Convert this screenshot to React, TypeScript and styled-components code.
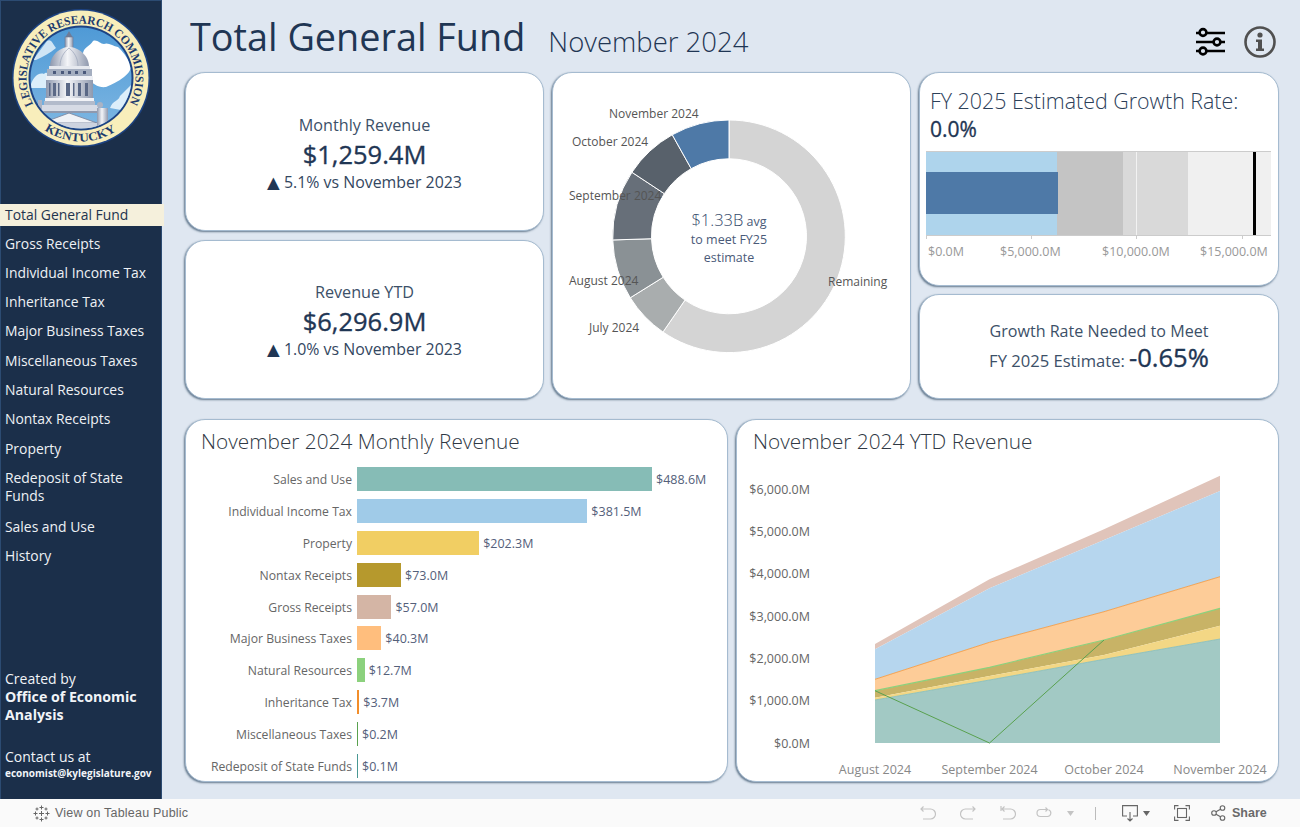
import React from "react";
import styled, { createGlobalStyle } from "styled-components";

const UI = `"Open Sans", "Noto Sans", sans-serif`;
const Global = createGlobalStyle`
  html, body { margin: 0; padding: 0; background: #dfe7f1; }
  * { box-sizing: border-box; }
`;
const Page = styled.div`
  width: 1300px; height: 827px; display: flex; flex-direction: column; overflow: hidden;
  font-family: ${UI}; background: #dfe7f1;
`;
const Board = styled.div`display: flex; height: 799px;`;
const Sidebar = styled.aside`
  width: 162px; flex: none; background: #1b2f4a; border: 1px solid #2c4b72; border-bottom: 0;
  display: flex; flex-direction: column; color: #f1f4f8; padding-bottom: 19px;
`;
const SealBox = styled.div`height: 204px; flex: none; margin: -1px 0 0 -1px;`;
const Nav = styled.nav`display: flex; flex-direction: column;`;
const NavItem = styled.div<{ $active?: boolean; $afterWrap?: boolean }>`
  font-size: 13.9px; line-height: 18px; padding: ${p => (p.$active ? "2px 5px" : "5.65px 5px")};
  margin-left: -1px; width: ${p => (p.$active ? "164px" : "160px")};
  background: ${p => (p.$active ? "#f5f0dc" : "transparent")};
  color: ${p => (p.$active ? "#22344e" : "#eef1f5")};
  ${p => p.$active && "margin-bottom: 3px;"}
  ${p => p.$afterWrap && "margin-top: 1.7px;"}
`;
const Foot = styled.div`margin-top: auto; padding-left: 4px; display: flex; flex-direction: column;`;
const FootLine = styled.div`font-size: 14px; line-height: 18px;`;
const FootBold = styled.div`font-size: 14.2px; line-height: 18px; font-weight: 700;`;
const Mail = styled.div`font-size: 10px; line-height: 13px; font-weight: 700; margin-top: 1px;`;
const Spacer = styled.div`height: 24px;`;

const Main = styled.main`flex: 1; padding: 0 21px 0 23px; display: flex; flex-direction: column;`;
const Header = styled.header`height: 72px; display: flex; align-items: center; padding: 4px 3px 0 5px; color: #1f3654;`;
const Title = styled.h1`margin: -2px 0 0; font-size: 37.8px; font-weight: 400; line-height: 44px;`;
const Sub = styled.span`font-size: 27.5px; margin-left: 23px; padding-top: 6px; font-weight: 300;`;
const HeadIcons = styled.div`margin: 8px 0 0 auto; display: flex; gap: 18px; align-items: center;`;
const TopGrid = styled.div`display: grid; grid-template-columns: 359px 359px 360px; column-gap: 8px; height: 327px;`;
const Stack = styled.div<{ $rows: string; $gap: number }>`
  display: grid; grid-template-rows: ${p => p.$rows}; row-gap: ${p => p.$gap}px;
`;
const Card = styled.section`
  background: #fff; border: 1px solid #a5bbd0; border-radius: 20px;
  box-shadow: -1px 1px 2px rgba(60, 85, 110, .75); overflow: hidden; min-width: 0;
`;
const Kpi = styled(Card)<{ $pad?: number }>`
  display: flex; flex-direction: column; align-items: center; justify-content: center; color: #1f3654;
  padding-top: ${p => p.$pad ?? 3}px;
`;
const KpiLabel = styled.div`font-size: 16.2px; line-height: 24px; color: #3c5068;`;
const KpiValue = styled.div`font-size: 25.5px; line-height: 34px; -webkit-text-stroke: .35px #1f3654;`;
const KpiDelta = styled.div`font-size: 15.9px; line-height: 22px; height: 22px; color: #33475f;`;
const Tri = styled.span`font-family: "DejaVu Sans", sans-serif; font-size: 16.5px; line-height: 0; color: #1f3654;`;
const NeededBody = styled.div`margin-top: -4px; display: flex; flex-direction: column; align-items: center;`;
const NeededLine = styled.div`
  font-size: 16.1px; line-height: 30px; height: 30px; color: #3c5068; display: flex; align-items: baseline;
  & + & { margin-top: -3px; font-size: 16.6px; }
`;
const NeededValue = styled.span`font-size: 25.6px; line-height: 30px; color: #1f3654; margin-left: 4px; -webkit-text-stroke: .35px #1f3654;`;
const ChartSvg = styled.svg`display: block;`;
const GrowthHead = styled.div`padding: 13px 0 0 10px; color: #1f3654; height: 78px;`;
const GrowthTitle = styled.div`font-size: 21.4px; line-height: 30px; color: #2c4059; font-weight: 300; white-space: nowrap;`;
const GrowthValue = styled.div`font-size: 21px; line-height: 26px; -webkit-text-stroke: .35px #1f3654;`;
const BottomGrid = styled.div`display: grid; grid-template-columns: 543px 543px; column-gap: 8px; height: 363px; margin-top: 20px;`;
const CardTitle = styled.h2`margin: 0; font-size: 20.8px; font-weight: 300; line-height: 28px; color: #2f3844;`;
const BarHead = styled.div<{ $left: number }>`padding: 7px 0 0 ${p => p.$left}px; height: 47px;`;
const AreaHead = styled(BarHead)`height: 46px;`;
const BarList = styled.div`display: flex; flex-direction: column;`;
const BarRow = styled.div<{ $tight?: boolean }>`
  display: grid; grid-template-columns: 166px 1fr; column-gap: 5px; align-items: center; height: 24px; margin-bottom: 8px;
  ${p => p.$tight && "margin-top: -1px;"}
`;
const BarLabel = styled.div`font-size: 12.2px; color: #666; text-align: right; white-space: nowrap;`;
const BarTrack = styled.div`display: flex; align-items: center; gap: 4px;`;
const Bar = styled.div<{ $color: string }>`height: 24px; background: ${p => p.$color}; flex: none;`;
const BarValue = styled.div`font-size: 12.5px; color: #54607a; white-space: nowrap;`;

const Toolbar = styled.footer`
  height: 28px; flex: none; background: #fafafa; display: flex; align-items: center; padding: 0 33px;
  font-family: "Liberation Sans", Arial, sans-serif; font-size: 12.5px; color: #666;
`;
const TabLink = styled.div`display: flex; align-items: center; gap: 5px; letter-spacing: .2px;`;
const Tools = styled.div`margin-left: auto; display: flex; align-items: center;`;
const Tool = styled.svg<{ $ml: number }>`display: block; margin-left: ${p => p.$ml}px; flex: none;`;
const ShareText = styled.span`margin-left: 6px; font-weight: 700; color: #6a6a6a; width: 35px; white-space: nowrap;`;
const Divider = styled.div`width: 1px; height: 13px; background: #bbb; margin-left: 21px;`;

const Seal = () => (
  <svg width="162" height="204" viewBox="0 0 162 204" style={{ display: "block" }}>
    <defs>
      <clipPath id="inner"><circle cx="81" cy="78" r="50.5" /></clipPath>
      <linearGradient id="dome" x1="0" x2="1" y1="0" y2="0">
        <stop offset="0" stopColor="#8d97ad" /><stop offset=".45" stopColor="#f4f5f8" /><stop offset="1" stopColor="#8f99ae" />
      </linearGradient>
      <linearGradient id="sky" x1="0" x2="0" y1="0" y2="1">
        <stop offset="0" stopColor="#4f9ad6" /><stop offset="1" stopColor="#7db6e2" />
      </linearGradient>
      <path id="topArc" d="M 33.2 104.2 A 54.5 54.5 0 1 1 128.8 104.2" />
      <path id="botArc" d="M 44.5 130 A 63.7 63.7 0 0 0 117.5 130" />
    </defs>
    <circle cx="81" cy="78" r="69" fill="#1d4383" />
    <circle cx="81" cy="78" r="67.5" fill="#f8eebb" />
    <circle cx="81" cy="78" r="52.5" fill="#1d4383" />
    <circle cx="81" cy="78" r="50.5" fill="url(#sky)" />
    <g clipPath="url(#inner)">
      <path d="M83 53 C84 47 90 46 93 41 C97 39 100 44 104 44 C108 42 113 46 118 47 C122 51 127 56 131 66 C131 70 128 74 124 77 C118 82 112 84 106 87 C99 88 92 84 88 78 C85 72 81 62 83 53 Z" fill="#fff" />
      <path d="M33 60 L47 41 C51 38 53 44 56 48 C50 53 44 56 36 60 Z" fill="#cfe5f5" />
      <path d="M30 88 C32 78 38 72 44 74 C47 70 52 76 50 88 Z" fill="#dceefa" />
      <path d="M110 108 C113 100 118 102 120 96 C124 92 128 88 132 84 L132 112 Z" fill="#dceefa" />
      <path d="M69 31 L73 38 H65 Z" fill="#6f7b96" />
      <rect x="65" y="37" width="8" height="11" fill="url(#dome)" stroke="#6f7b96" strokeWidth=".6" />
      <path d="M50 67 C50 55 60 47 69 47 C78 47 89 55 89 67 Z" fill="url(#dome)" />
      <path d="M60 66C60 58 64 52 69 48M78 66C78 58 74 52 69 48" stroke="#9aa4b8" strokeWidth=".7" fill="none" />
      <rect x="49" y="66" width="41" height="3" fill="#e6e9ef" />
      <rect x="47" y="69" width="45" height="7" fill="#a4aec0" />
      <path d="M53 71h3v3h-3zM61 71h3v3h-3zM68 71h3v3h-3zM75 71h3v3h-3zM83 71h3v3h-3z" fill="#49587a" />
      <rect x="46" y="76" width="47" height="4" fill="#eef0f5" />
      <rect x="46" y="80" width="47" height="18" fill="url(#dome)" />
      <path d="M49 83h1.5v13H49zM53 83h3v13h-3zM58 83h1.5v13H58zM66 83h4v13h-4zM78 83h3v13h-3zM85 83h3v13h-3zM73 83h1.5v13H73z" fill="#5a6886" />
      <rect x="45" y="98" width="49" height="3" fill="#f2f3f7" />
      <rect x="44" y="101" width="51" height="4" fill="#b3bbcb" />
      <rect x="41" y="105" width="57" height="6" fill="#d7dbe5" />
      <rect x="38" y="100" width="4" height="9" fill="#aab3c4" />
      <rect x="41" y="111" width="57" height="2" fill="#8f99ae" />
      <path d="M42 123 L69 113 L97 123 Z" fill="#f0f2f6" stroke="#7d88a0" strokeWidth=".9" />
      <rect x="40" y="123" width="60" height="9" fill="#cdd3df" />
      <rect x="97" y="108" width="11" height="18" fill="url(#dome)" /><circle cx="100" cy="105" r="3" fill="#aab3c4" />
    </g>
    <text fontFamily="'Liberation Serif', serif" fontWeight="700" fontSize="12" fill="#1d3b6e">
      <textPath href="#topArc" textLength="224" lengthAdjust="spacingAndGlyphs">LEGISLATIVE RESEARCH COMMISSION</textPath>
    </text>
    <text fontFamily="'Liberation Serif', serif" fontWeight="700" fontSize="12" fill="#1d3b6e">
      <textPath href="#botArc" textLength="76" lengthAdjust="spacingAndGlyphs">KENTUCKY</textPath>
    </text>
  </svg>
);

const SliderIcon = () => (
  <svg width="31" height="32" viewBox="0 0 31 32" fill="none" stroke="#000" strokeWidth="2.6">
    <path d="M1 7h3.5M12 7h18M1 16h17M26 16h4M1 25h3.5M12 25h18" />
    <circle cx="8" cy="6.5" r="3.4" /><circle cx="22" cy="16" r="3.4" /><circle cx="8" cy="25" r="3.4" />
  </svg>
);
const InfoIcon = () => (
  <svg width="32" height="32" viewBox="0 0 32 32">
    <circle cx="16" cy="16" r="14.5" fill="none" stroke="#505050" strokeWidth="2.6" />
    <circle cx="16" cy="9" r="2.6" fill="#505050" />
    <path d="M12 13.5h6v9h2v2.5h-8v-2.5h2v-6.5h-2z" fill="#505050" />
  </svg>
);

const ang = (deg: number, r: number) => {
  const a = (deg * Math.PI) / 180;
  return [729 + r * Math.sin(a), 236.3 - r * Math.cos(a)];
};
const seg = (a: number, b: number, R = 116.3, r = 77.5) => {
  const [x1, y1] = ang(a, R), [x2, y2] = ang(b, R), [x3, y3] = ang(b, r), [x4, y4] = ang(a, r);
  const large = b - a > 180 ? 1 : 0;
  return `M${x1} ${y1}A${R} ${R} 0 ${large} 1 ${x2} ${y2}L${x3} ${y3}A${r} ${r} 0 ${large} 0 ${x4} ${y4}Z`;
};
const donut = [
  { a: 0, b: 214.6, c: "#d4d4d4" },
  { a: 214.6, b: 238.1, c: "#a9adae" },
  { a: 238.1, b: 268.2, c: "#8a9195" },
  { a: 268.2, b: 303.4, c: "#676f79" },
  { a: 303.4, b: 330.8, c: "#58616b" },
  { a: 330.8, b: 360, c: "#4e79a7" },
];
const donutLabels = [
  ["November 2024", 609, 118], ["October 2024", 572, 146], ["September 2024", 569, 200],
  ["August 2024", 569, 285], ["July 2024", 589, 332], ["Remaining", 828, 286],
] as const;

const Donut = () => (
  <ChartSvg width="357" height="325" viewBox="553 73 357 325">
    {donut.map(d => <path key={d.a} d={seg(d.a, d.b)} fill={d.c} stroke="#fff" strokeWidth="1" />)}
    <g fontFamily={UI} fontSize="12" fill="#555">
      {donutLabels.map(([t, x, y]) => <text key={t} x={x} y={y}>{t}</text>)}
    </g>
    <g fontFamily={UI} fill="#4a5a78" textAnchor="middle" fontSize="12.5">
      <text x="729" y="226"><tspan fill="#34496a" fontSize="16.5" fontWeight="300">$1.33B</tspan> avg</text>
      <text x="729" y="244">to meet FY25</text>
      <text x="729" y="262">estimate</text>
    </g>
  </ChartSvg>
);

const bulletTicks = [926.5, 1031.5, 1136.5, 1242.5];
const bulletLabels = [["$0.0M", 928], ["$5,000.0M", 1000], ["$10,000.0M", 1102], ["$15,000.0M", 1200]] as const;
const Bullet = () => (
  <ChartSvg width="358" height="134" viewBox="920 151 358 134">
    <rect x="926" y="151" width="345" height="84" fill="#f0f0f0" />
    <rect x="1123" y="151" width="65" height="84" fill="#d9d9d9" />
    <rect x="1057" y="151" width="66" height="84" fill="#c4c4c4" />
    <rect x="926" y="151" width="131" height="84" fill="#aed4ec" />
    <rect x="926" y="172" width="132" height="42" fill="#4e79a7" />
    <rect x="1136" y="151" width="1" height="84" fill="#f2f2f2" />
    <rect x="1253" y="151" width="3" height="84" fill="#000" />
    <path d="M926 151.5H1271M926 235.5H1271" stroke="#ccc" />
    {bulletTicks.map(x => <path key={x} d={`M${x} 235V239`} stroke="#ccc" />)}
    <g fontFamily={UI} fontSize="12.5" fill="#999">
      {bulletLabels.map(([t, x]) => <text key={t} x={x} y="256">{t}</text>)}
    </g>
  </ChartSvg>
);

const bars = [
  ["Sales and Use", 488.6, "#86bcb6"], ["Individual Income Tax", 381.5, "#a0cbe8"], ["Property", 202.3, "#f1ce63"],
  ["Nontax Receipts", 73.0, "#b6992d"], ["Gross Receipts", 57.0, "#d4b5a5"], ["Major Business Taxes", 40.3, "#ffbe7d"],
  ["Natural Resources", 12.7, "#8cd17d"], ["Inheritance Tax", 3.7, "#f28e2b"], ["Miscellaneous Taxes", 0.2, "#59a14f"],
  ["Redeposit of State Funds", 0.1, "#499894"],
] as const;

const xs = [875, 989.5, 1104, 1220];
const edge = { pink: [644, 579.3, 529.3, 475.7], blue: [649.3, 588.3, 540, 491], orange: [679.3, 642.3, 611.7, 576.7], khaki: [690.7, 667.3, 640, 608.3], yellow: [697.7, 676, 655, 625.7], teal: [700, 680, 659.3, 639] };
const line = (ys: number[]) => ys.map((y, i) => `${xs[i]} ${y}`).join("L");
const band = (top: number[], bot?: number[]) => {
  const rev = bot ? [...bot].map((y, i) => `${xs[i]} ${y}`).reverse().join("L") : `1220 743L875 743`;
  return `M${line(top)}L${rev}Z`;
};
const yAxis = ["$6,000.0M", "$5,000.0M", "$4,000.0M", "$3,000.0M", "$2,000.0M", "$1,000.0M", "$0.0M"];
const yPos = [494, 536, 578, 620.5, 663, 705, 748];
const xAxis = [["August 2024", 875], ["September 2024", 989.5], ["October 2024", 1104], ["November 2024", 1220]] as const;

const Area = () => (
  <ChartSvg width="541" height="315" viewBox="737 466 541 315">
    <path d={band(edge.pink, edge.blue)} fill="#e0c4ba" />
    <path d={band(edge.blue, edge.orange)} fill="#b6d6ee" />
    <path d={band(edge.orange, edge.khaki)} fill="#fdcc98" />
    <path d={band(edge.khaki, edge.yellow)} fill="#c8b366" />
    <path d={band(edge.yellow, edge.teal)} fill="#f3d785" />
    <path d={band(edge.teal)} fill="#a2c9c4" />
    <path d={`M${line(edge.orange)}`} fill="none" stroke="#f28e2b" strokeWidth=".9" opacity=".8" />
    <path d={`M${line(edge.khaki)}`} fill="none" stroke="#8cd17d" strokeWidth="1.2" />
    <path d={`M${line(edge.teal)}`} fill="none" stroke="#86bcb6" strokeWidth=".8" />
    <path d="M875 690.7L989.5 743L1104 640" fill="none" stroke="#59a14f" strokeWidth="1" />
    <g fontFamily={UI} fontSize="12.5" fill="#666" textAnchor="end">
      {yAxis.map((t, i) => <text key={t} x="810" y={yPos[i]}>{t}</text>)}
    </g>
    <g fontFamily={UI} fontSize="12.5" fill="#888" textAnchor="middle">
      {xAxis.map(([t, x]) => <text key={t} x={x} y="774">{t}</text>)}
    </g>
  </ChartSvg>
);

const navItems = ["Gross Receipts", "Individual Income Tax", "Inheritance Tax", "Major Business Taxes", "Miscellaneous Taxes", "Natural Resources", "Nontax Receipts", "Property", "Redeposit of State Funds", "Sales and Use", "History"];

const dim = "#c4c4c4";
const Delta = ({ text }: { text: string }) => <KpiDelta><Tri>▲</Tri> {text}</KpiDelta>;

export default function App() {
  return (
    <Page>
      <Global />
      <Board>
        <Sidebar>
          <SealBox><Seal /></SealBox>
          <Nav>
            <NavItem $active>Total General Fund</NavItem>
            {navItems.map(n => <NavItem key={n} $afterWrap={n === "Sales and Use"}>{n}</NavItem>)}
          </Nav>
          <Foot>
            <FootLine>Created by</FootLine>
            <FootBold>Office of Economic</FootBold>
            <FootBold>Analysis</FootBold>
            <Spacer />
            <FootLine>Contact us at</FootLine>
            <Mail>economist@kylegislature.gov</Mail>
          </Foot>
        </Sidebar>
        <Main>
          <Header>
            <Title>Total General Fund</Title>
            <Sub>November 2024</Sub>
            <HeadIcons><SliderIcon /><InfoIcon /></HeadIcons>
          </Header>
          <TopGrid>
            <Stack $rows="159px 159px" $gap={9}>
              <Kpi><KpiLabel>Monthly Revenue</KpiLabel><KpiValue>$1,259.4M</KpiValue><Delta text="5.1% vs November 2023" /></Kpi>
              <Kpi $pad={1}><KpiLabel>Revenue YTD</KpiLabel><KpiValue>$6,296.9M</KpiValue><Delta text="1.0% vs November 2023" /></Kpi>
            </Stack>
            <Card><Donut /></Card>
            <Stack $rows="214px 105px" $gap={8}>
              <Card>
                <GrowthHead>
                  <GrowthTitle>FY 2025 Estimated Growth Rate:</GrowthTitle>
                  <GrowthValue>0.0%</GrowthValue>
                </GrowthHead>
                <Bullet />
              </Card>
              <Kpi $pad={0}>
                <NeededBody>
                  <NeededLine>Growth Rate Needed to Meet</NeededLine>
                  <NeededLine>FY 2025 Estimate: <NeededValue>-0.65%</NeededValue></NeededLine>
                </NeededBody>
              </Kpi>
            </Stack>
          </TopGrid>
          <BottomGrid>
            <Card>
              <BarHead $left={15}><CardTitle>November 2024 Monthly Revenue</CardTitle></BarHead>
              <BarList>
                {bars.map(([n, v, c], i) => (
                  <BarRow key={n} $tight={i === 5}>
                    <BarLabel>{n}</BarLabel>
                    <BarTrack>
                      <Bar $color={c} style={{ width: Math.max(1, (v * 295) / 488.6) }} />
                      <BarValue>${v.toFixed(1)}M</BarValue>
                    </BarTrack>
                  </BarRow>
                ))}
              </BarList>
            </Card>
            <Card>
              <AreaHead $left={16}><CardTitle>November 2024 YTD Revenue</CardTitle></AreaHead>
              <Area />
            </Card>
          </BottomGrid>
        </Main>
      </Board>
      <Toolbar>
        <TabLink>
          <svg width="17" height="17" viewBox="0 0 17 17" stroke="#666" strokeWidth="1" fill="none">
            <path d="M8.5 0.5v4M6.5 2.5h4M8.5 12.5v4M6.5 14.5h4M0.5 8.5h4M2.5 6.5v4M12.5 8.5h4M14.5 6.5v4M8.5 6v5M6 8.5h5M4 2.5v3M2.5 4h3M13 2.5v3M11.5 4h3M4 11.5v3M2.5 13h3M13 11.5v3M11.5 13h3" />
          </svg>
          <span>View on Tableau Public</span>
        </TabLink>
        <Tools>
          <Tool $ml={0} width="16" height="16" viewBox="0 0 16 16" fill="none" stroke={dim} strokeWidth="1.2"><path d="M1 4h9.5a5 5 0 0 1 0 10H3M3.5 1.5L1 4l2.5 2.5" /></Tool>
          <Tool $ml={24} width="16" height="16" viewBox="0 0 16 16" fill="none" stroke={dim} strokeWidth="1.2"><path d="M15 4H5.5a5 5 0 0 0 0 10H13M12.5 1.5L15 4l-2.5 2.5" /></Tool>
          <Tool $ml={24} width="16" height="16" viewBox="0 0 16 16" fill="none" stroke={dim} strokeWidth="1.2"><path d="M1 1v5M2 4h8.5a5 5 0 0 1 0 10H3M4.5 1.5L2 4l2.5 2.5" /></Tool>
          <Tool $ml={20} width="16" height="16" viewBox="0 0 16 16" fill="none" stroke={dim} strokeWidth="1.2"><path d="M11 4.5H4.5a3.5 3.5 0 0 0 0 7h7a3.5 3.5 0 0 0 1-6.8M9.5 2.5L11.5 4.5l-2 2" /></Tool>
          <Tool $ml={15} width="7" height="5" viewBox="0 0 7 5" fill={dim}><path d="M0 0h7L3.5 5z" /></Tool>
          <Divider />
          <Tool $ml={26} width="16" height="17" viewBox="0 0 16 17" fill="none" stroke="#666" strokeWidth="1.1"><path d="M5 11H.6V.6h14.8V11H11M8 7v9M5.5 13.5L8 16l2.5-2.5" /></Tool>
          <Tool $ml={5} width="7" height="5" viewBox="0 0 7 5" fill="#666"><path d="M0 0h7L3.5 5z" /></Tool>
          <Tool $ml={24} width="16" height="16" viewBox="0 0 16 16" fill="none" stroke="#666" strokeWidth="1.1"><path d="M.6 4.5V.6h3.9M11.5.6h3.9v3.9M15.4 11.5v3.9h-3.9M4.5 15.4H.6v-3.9" /><rect x="3.5" y="3.5" width="9" height="9" /></Tool>
          <Tool $ml={21} width="15" height="16" viewBox="0 0 15 16" fill="none" stroke="#666" strokeWidth="1.1"><circle cx="3" cy="8" r="2.3" /><circle cx="11.5" cy="3" r="2.3" /><circle cx="11.5" cy="13" r="2.3" /><path d="M5 6.8l4.5-2.6M5 9.2l4.5 2.6" /></Tool>
          <ShareText>Share</ShareText>
        </Tools>
      </Toolbar>
    </Page>
  );
}
